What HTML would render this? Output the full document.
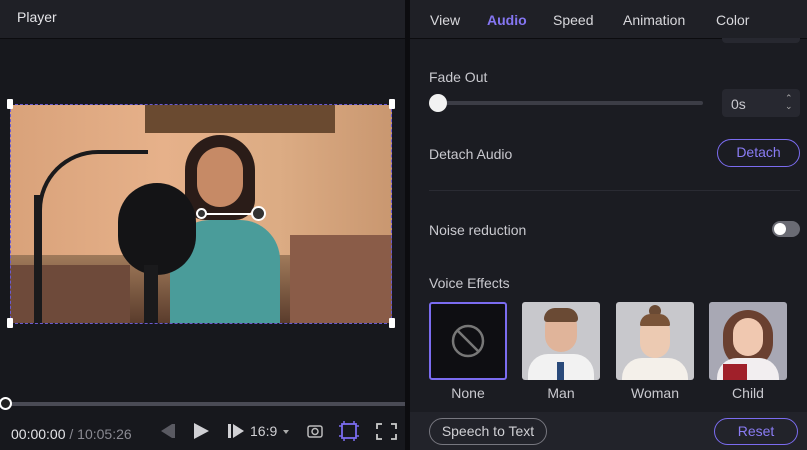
<!DOCTYPE html>
<html><head><meta charset="utf-8"><style>
*{margin:0;padding:0;box-sizing:border-box}
body{width:807px;height:450px;overflow:hidden;background:#17181d;font-family:"Liberation Sans",sans-serif;position:relative;color:#d8d8dc}
.a{position:absolute}
.t{font-size:14px;color:#c9c9cf}
</style></head><body>
<!-- left panel -->
<div class="a" style="left:0;top:0;width:405px;height:39px;background:#1f2026;border-bottom:1px solid #0c0c0f"></div>
<div class="a" style="left:17px;top:9px;font-size:14px;color:#e4e4e8">Player</div>
<div class="a" style="left:0;top:40px;width:405px;height:410px;background:#17181d"></div>
<!-- video -->
<div class="a" style="left:10px;top:105px;width:382px;height:218px;overflow:hidden;background:linear-gradient(90deg,#d9a27a 0%,#e6b18a 40%,#dcac84 70%,#c99770 100%)">
 <div class="a" style="left:135px;top:0;width:190px;height:28px;background:#6a4a30"></div>
 <div class="a" style="left:0;top:150px;width:382px;height:68px;background:linear-gradient(180deg,#a07a5a,#5a3c2c)"></div>
 <div class="a" style="left:280px;top:130px;width:102px;height:88px;background:#8a5c48"></div>
 <div class="a" style="left:0;top:160px;width:120px;height:58px;background:#6e4a3a"></div>
 <div class="a" style="left:175px;top:30px;width:70px;height:85px;border-radius:35px 35px 20px 20px;background:#2a1c18"></div>
 <div class="a" style="left:187px;top:42px;width:46px;height:60px;border-radius:23px;background:#c68a66"></div>
 <div class="a" style="left:160px;top:115px;width:110px;height:103px;border-radius:40px 40px 0 0;background:#4a9c9a"></div>
 <div class="a" style="left:108px;top:78px;width:78px;height:92px;border-radius:40px;background:#141416"></div>
 <div class="a" style="left:134px;top:160px;width:14px;height:58px;background:#1a1a1c"></div>
 <div class="a" style="left:28px;top:45px;width:110px;height:120px;border:4px solid #1a1a1c;border-right:none;border-bottom:none;border-radius:60px 0 0 0"></div>
 <div class="a" style="left:24px;top:90px;width:8px;height:128px;background:#1a1a1c"></div>
</div>
<div class="a" style="left:10px;top:104px;width:382px;height:220px;border:1px dashed #6a5ad0"></div>
<div class="a" style="left:7px;top:99px;width:6px;height:10px;background:#fff;border-radius:1px"></div>
<div class="a" style="left:389px;top:99px;width:6px;height:10px;background:#fff;border-radius:1px"></div>
<div class="a" style="left:7px;top:318px;width:6px;height:10px;background:#fff;border-radius:1px"></div>
<div class="a" style="left:389px;top:318px;width:6px;height:10px;background:#fff;border-radius:1px"></div>
<div class="a" style="left:202px;top:213px;width:56px;height:2px;background:#fff"></div>
<div class="a" style="left:196px;top:208px;width:11px;height:11px;border-radius:50%;border:2px solid #fff;background:#333"></div>
<div class="a" style="left:251px;top:206px;width:15px;height:15px;border-radius:50%;border:2px solid #fff;background:#333"></div>
<!-- timeline -->
<div class="a" style="left:0;top:402px;width:405px;height:4px;background:#4a4b55"></div>
<div class="a" style="left:-1px;top:397px;width:13px;height:13px;border-radius:50%;border:2px solid #fff;background:#222"></div>
<div class="a" style="left:11px;top:426px;font-size:14px;color:#e4e4e8">00:00:00 <span style="color:#8a8a92">/ 10:05:26</span></div>
<svg class="a" style="left:155px;top:420px" width="250" height="22">
 <path d="M5 4 L16 11 L5 18Z" fill="#5a5a62" transform="translate(22 0) scale(-1 1) translate(0 0)"/>
 <rect x="17" y="4" width="3" height="14" fill="#5a5a62"/>
 <path d="M39 3 L54 11 L39 19Z" fill="#d0d0d4"/>
 <rect x="73" y="4" width="3" height="14" fill="#d0d0d4"/>
 <path d="M78 4 L89 11 L78 18Z" fill="#d0d0d4"/>
 <text x="95" y="16" font-size="14" fill="#d0d0d4" font-family="Liberation Sans">16:9</text>
 <path d="M128 10 L134 10 L131 14Z" fill="#aaa"/>
 <rect x="153" y="6" width="14" height="11" rx="2" fill="none" stroke="#bbb" stroke-width="1.5"/>
 <circle cx="160" cy="11.5" r="3" fill="none" stroke="#bbb" stroke-width="1.5"/>
 <rect x="187" y="4" width="14" height="14" fill="none" stroke="#7b6cf0" stroke-width="1.8"/>
 <path d="M184 6h3M184 16h3M201 6h3M201 16h3M189 1v3M199 1v3M189 18v3M199 18v3" stroke="#7b6cf0" stroke-width="1.5"/>
 <path d="M222 9V4h5M236 4h5v5M241 14v5h-5M227 19h-5v-5" fill="none" stroke="#ccc" stroke-width="1.8"/>
</svg>
<!-- divider -->
<div class="a" style="left:405px;top:0;width:5px;height:450px;background:#0c0c0f"></div>
<!-- right panel -->
<div class="a" style="left:410px;top:0;width:397px;height:450px;background:#1b1c22"></div>
<div class="a" style="left:410px;top:0;width:397px;height:39px;background:#1f2026;border-bottom:1px solid #0c0c0f"></div>
<div class="a" style="left:430px;top:12px;font-size:14px;color:#d8d8dc">View</div>
<div class="a" style="left:487px;top:12px;font-size:14px;font-weight:bold;color:#8576f2">Audio</div>
<div class="a" style="left:553px;top:12px;font-size:14px;color:#d8d8dc">Speed</div>
<div class="a" style="left:623px;top:12px;font-size:14px;color:#d8d8dc">Animation</div>
<div class="a" style="left:716px;top:12px;font-size:14px;color:#d8d8dc">Color</div>
<div class="a" style="left:722px;top:38px;width:78px;height:5px;background:#272830;border-radius:0 0 4px 4px"></div>
<div class="a t" style="left:429px;top:69px">Fade Out</div>
<div class="a" style="left:438px;top:101px;width:265px;height:4px;background:#3c3d46;border-radius:2px"></div>
<div class="a" style="left:429px;top:94px;width:18px;height:18px;border-radius:50%;background:#f2f2f2"></div>
<div class="a" style="left:722px;top:89px;width:78px;height:28px;background:#272830;border-radius:4px"></div>
<div class="a t" style="left:731px;top:96px">0s</div>
<div class="a" style="left:785px;top:94px;font-size:9px;color:#aaa;line-height:8px">⌃<br>⌄</div>
<div class="a t" style="left:429px;top:146px">Detach Audio</div>
<div class="a" style="left:717px;top:139px;width:83px;height:28px;border:1.5px solid #7b6cf0;border-radius:14px;text-align:center;line-height:25px;font-size:14px;color:#8a7cf4">Detach</div>
<div class="a" style="left:429px;top:190px;width:371px;height:1px;background:#2a2b33"></div>
<div class="a t" style="left:429px;top:222px">Noise reduction</div>
<div class="a" style="left:772px;top:221px;width:28px;height:16px;border-radius:8px;background:#6a6b74"></div>
<div class="a" style="left:774px;top:223px;width:12px;height:12px;border-radius:50%;background:#fff"></div>
<div class="a t" style="left:429px;top:275px">Voice Effects</div>
<div class="a" style="left:429px;top:302px;width:78px;height:78px;border:2px solid #7b6cf0;border-radius:3px;background:#0e0e12"></div>
<svg class="a" style="left:451px;top:324px" width="34" height="34"><circle cx="17" cy="17" r="15" fill="none" stroke="#777" stroke-width="2.5"/><path d="M7 7L27 27" stroke="#777" stroke-width="2.5"/></svg>
<!-- portraits -->
<div class="a" style="left:522px;top:302px;width:78px;height:78px;border-radius:3px;background:#c8c8cc;overflow:hidden">
 <div class="a" style="left:6px;top:52px;width:66px;height:30px;border-radius:20px 20px 0 0;background:#f2f2f2"></div>
 <div class="a" style="left:35px;top:60px;width:7px;height:20px;background:#2a4a7a"></div>
 <div class="a" style="left:23px;top:8px;width:32px;height:42px;border-radius:16px;background:#e0b49a"></div>
 <div class="a" style="left:22px;top:6px;width:34px;height:14px;border-radius:14px 14px 4px 4px;background:#6a4a34"></div>
</div>
<div class="a" style="left:616px;top:302px;width:78px;height:78px;border-radius:3px;background:#c8c8cc;overflow:hidden">
 <div class="a" style="left:6px;top:56px;width:66px;height:26px;border-radius:20px 20px 0 0;background:#f4f0ea"></div>
 <div class="a" style="left:24px;top:14px;width:30px;height:42px;border-radius:15px;background:#eccab2"></div>
 <div class="a" style="left:33px;top:3px;width:12px;height:12px;border-radius:50%;background:#6a4a34"></div>
 <div class="a" style="left:24px;top:12px;width:30px;height:12px;border-radius:15px 15px 2px 2px;background:#7a5438"></div>
</div>
<div class="a" style="left:709px;top:302px;width:78px;height:78px;border-radius:3px;background:#a8a8b4;overflow:hidden">
 <div class="a" style="left:14px;top:8px;width:50px;height:58px;border-radius:25px;background:#6a4030"></div>
 <div class="a" style="left:8px;top:56px;width:62px;height:26px;border-radius:20px 20px 0 0;background:#f2eef0"></div>
 <div class="a" style="left:24px;top:16px;width:30px;height:38px;border-radius:15px;background:#f0c8b0"></div>
 <div class="a" style="left:14px;top:62px;width:24px;height:16px;background:#a0202a"></div>
</div>
<div class="a t" style="left:429px;top:385px;width:78px;text-align:center">None</div>
<div class="a t" style="left:522px;top:385px;width:78px;text-align:center">Man</div>
<div class="a t" style="left:616px;top:385px;width:78px;text-align:center">Woman</div>
<div class="a t" style="left:709px;top:385px;width:78px;text-align:center">Child</div>
<div class="a" style="left:410px;top:412px;width:397px;height:38px;background:#22232a"></div>
<div class="a" style="left:429px;top:418px;width:118px;height:27px;border:1.5px solid #77777f;border-radius:14px;text-align:center;line-height:24px;font-size:14px;color:#d0d0d4">Speech to Text</div>
<div class="a" style="left:714px;top:418px;width:84px;height:27px;border:1.5px solid #7b6cf0;border-radius:14px;text-align:center;line-height:24px;font-size:14px;color:#8a7cf4">Reset</div>
</body></html>
